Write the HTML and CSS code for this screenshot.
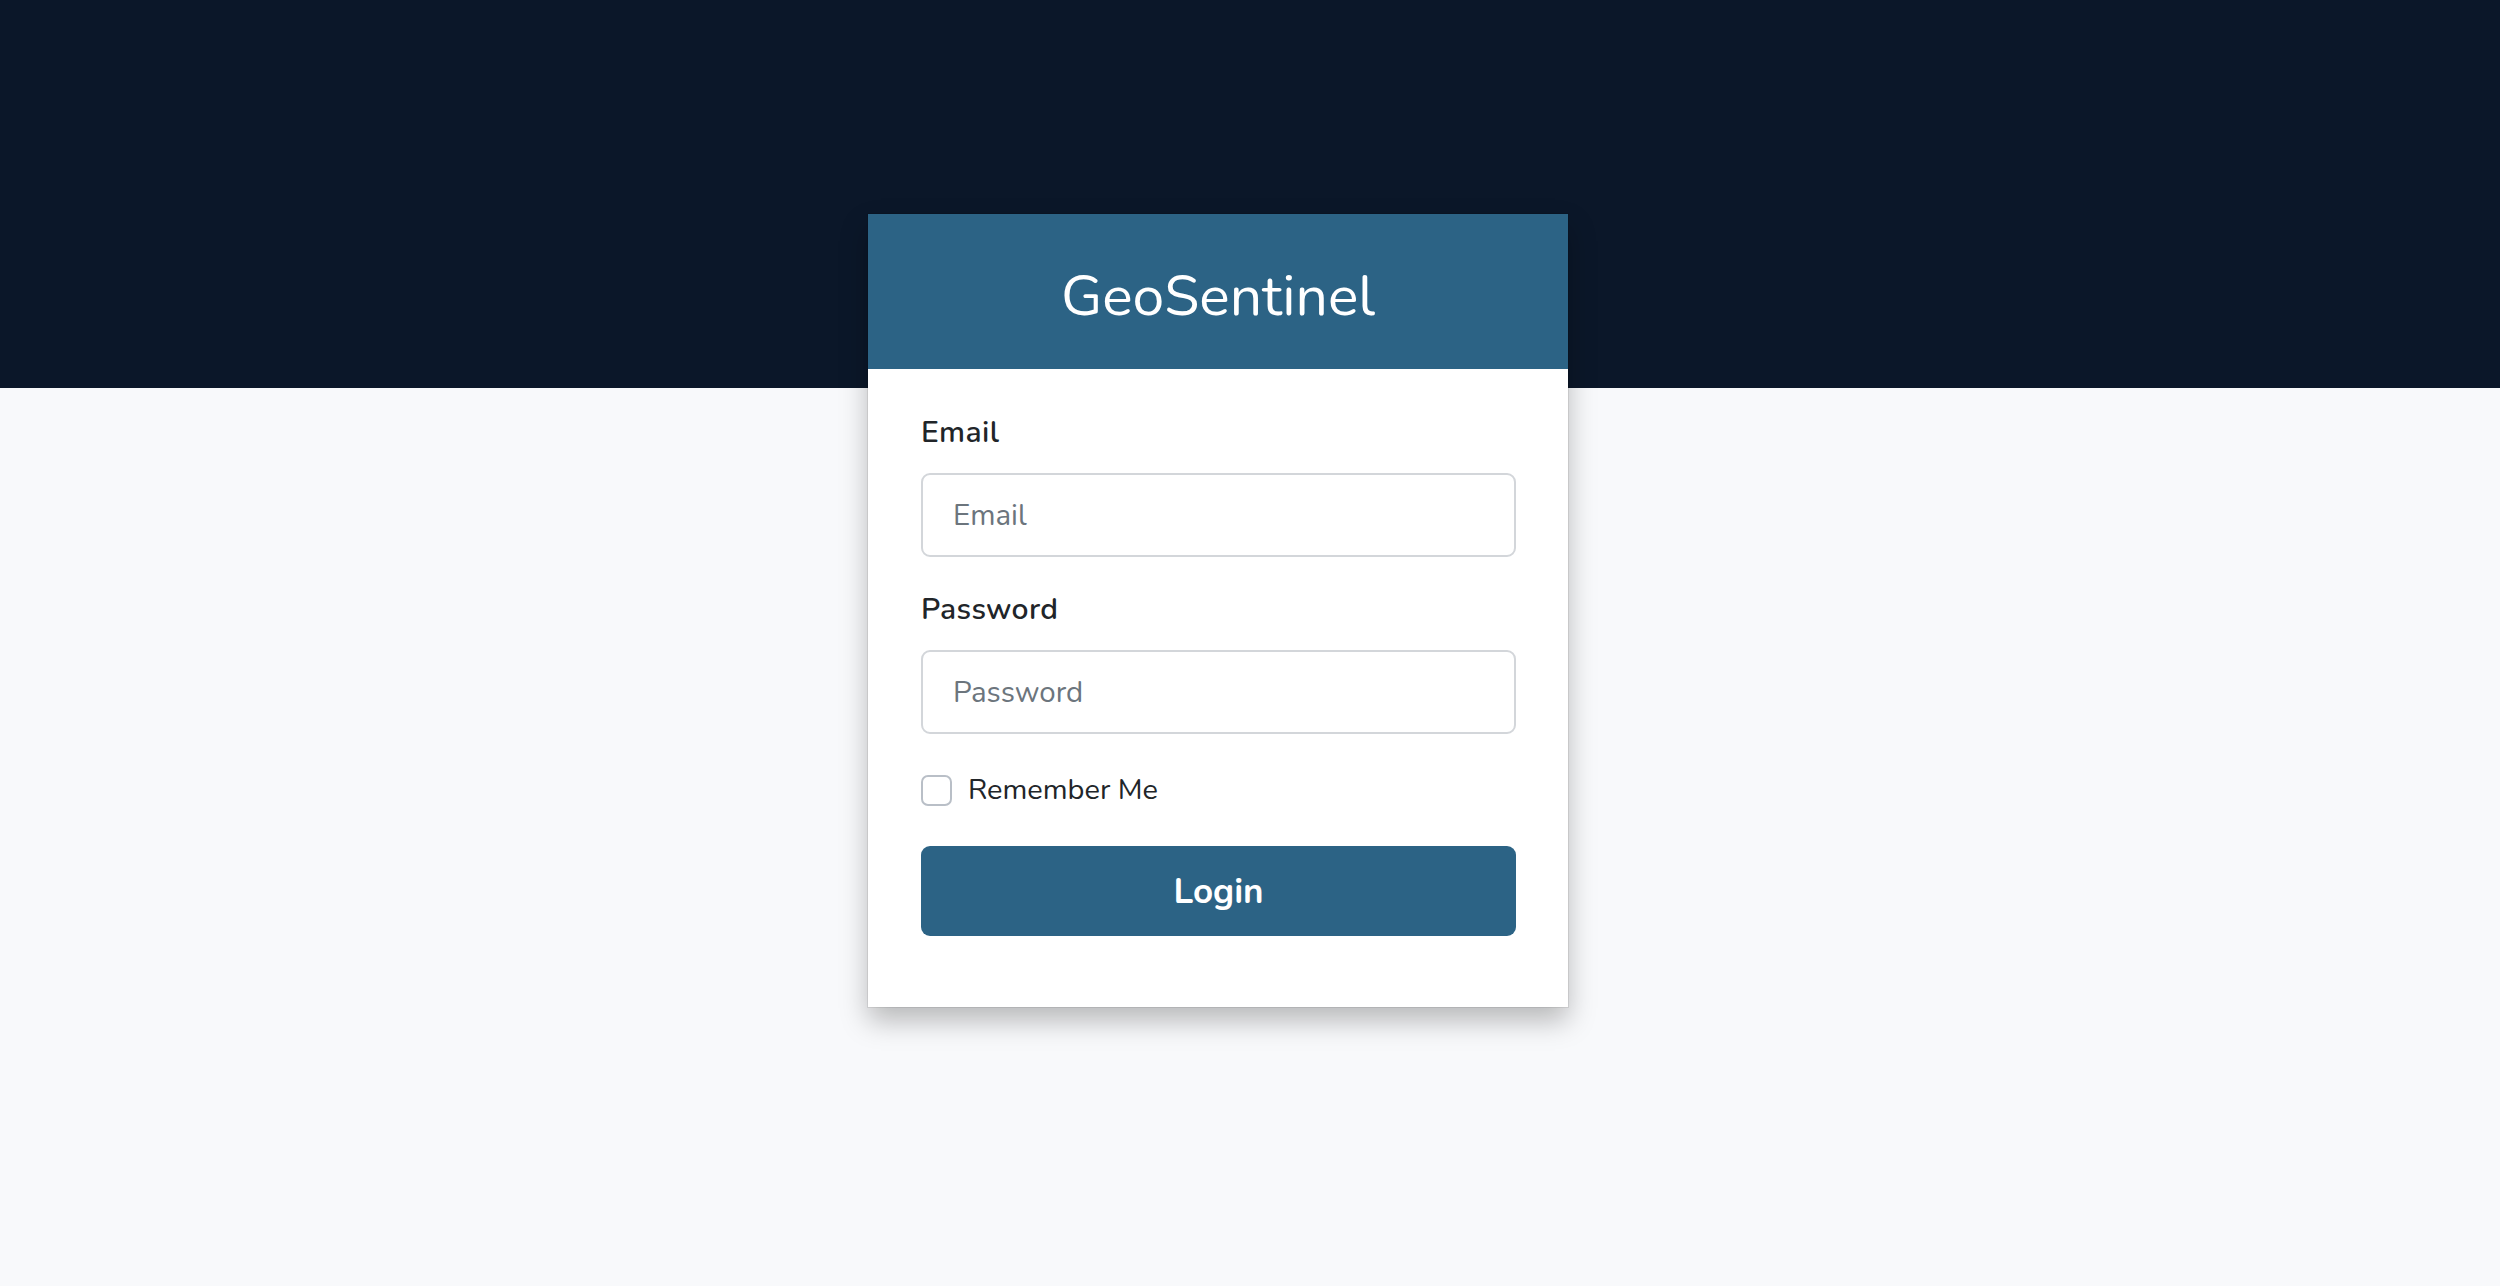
FILE: index.html
```html
<!DOCTYPE html>
<html lang="en">
<head>
<meta charset="utf-8">
<title>GeoSentinel - Login</title>
<link rel="stylesheet" href="styles.css">
</head>
<body>
<main class="page">
  <section class="card">
    <header class="card-header">
      <h1 class="brand">GeoSentinel</h1>
    </header>
    <form class="card-body">
      <label class="field-label" for="email">Email</label>
      <input class="field-input" id="email" type="email" placeholder="Email">
      <label class="field-label" for="password">Password</label>
      <input class="field-input" id="password" type="password" placeholder="Password">
      <div class="check-row">
        <input class="check-box" id="remember" type="checkbox">
        <label class="check-label" for="remember">Remember Me</label>
      </div>
      <button class="login-btn" type="button">Login</button>
    </form>
  </section>
</main>
</body>
</html>
```

FILE: styles.css
```css
* { box-sizing: border-box; }

html, body {
  margin: 0;
  padding: 0;
}

body {
  min-height: 1286px;
  background: linear-gradient(to bottom, #0b1729 0, #0b1729 388px, #f8f9fb 388px, #f8f9fb 100%);
  font-family: "Nunito", Lato, "Open Sans", sans-serif;
  color: #212529;
}

.page {
  display: flex;
  justify-content: center;
  padding-top: 214px;
  padding-right: 64px;
}

.card {
  width: 700px;
  background: #ffffff;
  box-shadow: 0 0 0 1px rgba(0, 0, 0, 0.08), 0 14px 26px rgba(0, 0, 0, 0.26);
}

.card-header {
  height: 155px;
  background: #2c6385;
  display: flex;
  align-items: center;
  justify-content: center;
}

.brand {
  margin: 0;
  padding-top: 10px;
  font-size: 57px;
  font-weight: 400;
  color: #ffffff;
  line-height: 1.2;
}

.card-body {
  display: flex;
  flex-direction: column;
  padding: 43px 52px 71px 53px;
}

.field-label {
  font-size: 30px;
  line-height: 42px;
  font-weight: 600;
  letter-spacing: 0.4px;
  color: #212529;
  margin-bottom: 19px;
}

.field-input {
  height: 84px;
  margin: 0 0 32px 0;
  padding: 0 30px;
  border: 2px solid #d3d6da;
  border-radius: 9px;
  font-family: inherit;
  font-size: 29.5px;
  color: #212529;
  background: #ffffff;
  outline: none;
}

.field-input::placeholder {
  color: #6c757d;
}

.check-row {
  display: flex;
  align-items: center;
  gap: 16px;
  margin-top: 3px;
  margin-bottom: 35px;
}

.check-box {
  appearance: none;
  -webkit-appearance: none;
  width: 31px;
  height: 31px;
  margin: 0;
  border: 2px solid #b9bfc7;
  border-radius: 7px;
  background: #ffffff;
}

.check-label {
  font-size: 29px;
  line-height: 42px;
  color: #212529;
}

.login-btn {
  height: 90px;
  border: none;
  border-radius: 9px;
  background: #2c6385;
  color: #ffffff;
  font-family: inherit;
  font-size: 35px;
  font-weight: 700;
}
```
